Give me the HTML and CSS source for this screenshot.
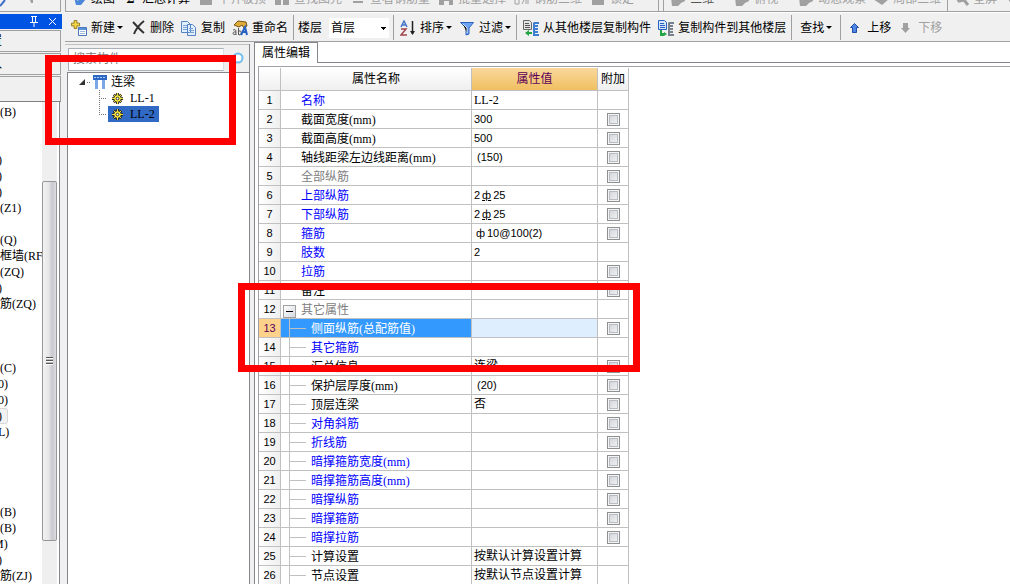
FILE: index.html
```
<!DOCTYPE html>
<html lang="zh-CN">
<head>
<meta charset="utf-8">
<title>属性编辑</title>
<link rel="stylesheet" href="styles.css">
</head>
<body>
<svg class="defs" aria-hidden="true">
  <symbol id="block" viewBox="0 0 16 16"><path fill="#a0a0a0" d="M2 3h12v11H2z"/></symbol>
  <symbol id="blob" viewBox="0 0 16 16"><path fill="#a0a0a0" d="M1 6h5l2-3h7v7l-4 2-3 3H2z"/></symbol>
  <symbol id="beam" viewBox="0 0 16 16"><path fill="#2f67c4" d="M1 1h14v5H1z"/><path stroke="#a9cdf6" stroke-dasharray="2 1" d="M2 3.500h12"/><path fill="#7ba7e6" d="M3 6h3v9H3zM10 6h3v9h-3z"/></symbol>
  <symbol id="gear" viewBox="0 0 12 12"><path stroke="#222" stroke-width="3" d="M6 0v12M0 6h12M2 2l8 8M10 2l-8 8"/><path stroke="#ffee3a" stroke-width="1" d="M6 0v12M0 6h12M2 2l8 8M10 2l-8 8"/><circle cx="6" cy="6" r="3.500" fill="#ffee3a"/><circle cx="6" cy="6" r="1.500" fill="#fff" stroke="#222"/></symbol>
  <symbol id="floors" viewBox="0 0 16 16"><path fill="#e4e4e4" stroke="#666" d="M.5 .5h6l2 2v7h-8z"/><path stroke="#555" d="M2 3.500h4M2 5.500h5M2 7.500h5"/><path fill="#23a445" d="M2 13l4-3v2h3v2H6v2z"/><path fill="#3c7fd0" d="M11 2h5v2h-4v1h3v2h-3v1h3v2h-3v1h3v2h-3v1h4v2h-6V3z"/></symbol>
  <symbol id="floors-to" viewBox="0 0 16 16"><path fill="#d5e5fc" stroke="#2861c4" d="M.5 .5h6l2 2v7h-8z"/><path stroke="#2861c4" d="M2 3.500h4M2 5.500h5M2 7.500h5"/><path fill="#23a445" d="M2 10h2v3h2v-1l3 2-3 2H2z"/><path fill="#77808c" d="M11 2h5v2h-4v1h3v2h-3v1h3v2h-3v1h3v2h-3v1h4v2h-6V3z"/></symbol>
</svg>

<div class="app">
  <aside class="nav">
    <div class="nav-top"><svg width="60" height="11"><path d="M5 0l-5 6" stroke="#3c6fc8" stroke-width="2"/><path d="M30 0h3v3h-2z" fill="#a0a0a0"/></svg></div>
    <header class="nav-title">
      <button aria-label="固定"><svg width="10" height="11" viewBox="0 0 10 11"><path fill="none" stroke="#fff" d="M2 .5h6M3.500 1v5M6.500 1v5M1 6.500h8M5 7v4"/></svg></button>
      <button aria-label="关闭"><svg width="9" height="9" viewBox="0 0 9 9"><path stroke="#fff" d="M1 1l7 7M8 1L1 8"/></svg></button>
    </header>
    <button class="nav-tab">工程设置</button>
    <button class="nav-tab">绘图输入</button>
    <div class="nav-tools"></div>
    <div class="nav-body">
      <ul class="nav-list">
        <li>(B)</li><li></li><li></li><li class="cut">)</li><li class="cut">)</li><li class="cut">)</li><li>(Z1)</li><li></li>
        <li>(Q)</li><li>框墙(RF</li><li>(ZQ)</li><li class="cut">)</li><li>筋(ZQ)</li><li></li><li></li><li></li>
        <li>(C)</li><li class="cut">0)</li><li class="cut">0)</li><li class="hot">)</li><li class="cut">L)</li><li></li><li></li><li></li><li></li>
        <li>(B)</li><li>(B)</li><li class="cut wide">M)</li><li class="cut">)</li><li>筋(ZJ)</li>
      </ul>
      <div class="scroll"><div class="before"></div><div class="thumb"><i></i></div><div class="after"></div></div>
    </div>
  </aside>

  <main class="main">
    <div class="strip">
      <div class="strip-row">
        <span class="tool live"><svg class="ic"><path d="M3 6l8-6 4 8-5 6H5z" fill="#4c86d8"/><path d="M6 9l6-6" stroke="#fff" stroke-width="2"/></svg>绘图</span>
        <span class="tool live"><b>Σ</b>汇总计算</span>
        <span class="tool"><svg class="ic"><use href="#block"/></svg>平齐板顶</span>
        <span class="tool"><svg class="ic"><path fill="#a0a0a0" d="M1 2h6v12H1zM9 2h6v12H9z"/></svg>查找图元</span>
        <span class="tool"><svg class="ic"><path fill="#a0a0a0" d="M3 10h10v2H3z"/></svg>查看钢筋量</span>
        <span class="tool"><svg class="ic"><path fill="#a0a0a0" d="M1 4h14v10h-4v-4H6v4H1z"/></svg>批量选择</span>
        <span class="tool"><svg class="ic"><path fill="none" stroke="#a0a0a0" d="M1 5v8h4V5M8 13l4-8v8M14 5v8"/></svg>钢筋三维</span>
        <span class="tool"><svg class="ic"><use href="#block"/></svg>锁定</span>
      </div>
      <div class="strip-row view">
        <span class="tool pressed"><svg class="ic"><use href="#blob"/></svg>三维<i class="arrow"></i></span>
        <span class="tool"><svg class="ic"><use href="#blob"/></svg>俯视<i class="arrow"></i></span>
        <span class="tool"><svg class="ic"><use href="#blob"/></svg>动态观察</span>
        <span class="tool"><svg class="ic"><path fill="#a0a0a0" d="M0 8l4-6h8l4 6-7 6z"/></svg>局部三维</span>
      </div>
      <div class="strip-row zooming">
        <span class="tool"><svg class="ic"><path fill="none" stroke="#a0a0a0" stroke-width="3" d="M3 5l3 5 5-1 4 5"/></svg>全屏</span>
        <span class="tool"><svg class="ic"><path fill="none" stroke="#a0a0a0" stroke-width="3" d="M3 5l3 5 5-1 4 5"/></svg></span>
      </div>
    </div>

    <div class="toolbar">
      <div class="group">
        <button class="tool"><svg class="ic"><path fill="#f5d746" stroke="#8d7410" d="M3.500 .5h3v3h3v3h-3v3h-3v-3h-3v-3h3z" transform="scale(.9)"/><path fill="#fff" stroke="#4776b8" d="M7.500 7.500h8v8h-8z"/><path fill="#5b92dc" d="M8 8h7v2H8z"/><path stroke="#9ab6dc" d="M9 11.500h5M9 13.500h5"/></svg>新建<i class="arrow"></i></button>
        <button class="tool"><svg class="ic"><path fill="none" stroke="#333" stroke-width="2" d="M3 2c3 3 7 8 11 11M14 1C10 4 6 9 4 14"/></svg>删除</button>
        <button class="tool"><svg class="ic"><path fill="#e4effd" stroke="#5582c2" d="M.5 1.500h6l3 3v8h-9zM6.500 4.500h5l3 3v8h-8z"/><path stroke="#78a2dc" d="M2 5.500h4M2 7.500h4M2 9.500h4M8 8.500h4M8 10.500h5M8 12.500h5"/></svg>复制</button>
        <button class="tool"><svg class="ic"><path fill="#e0ad3b" stroke="#775314" d="M2 5l4-4 8 1 1 4-3 2-2-3-3 2z"/><path fill="none" stroke="#555" d="M1 10c3-1 3 0 3 5M4 12c-4-1-4 4 0 2M6.500 8v7M7 11c3-1 3 4 0 4"/><path fill="none" stroke="#2861c4" stroke-width="2" d="M9 15l4-8 2 8M10 12h4"/></svg>重命名</button>
      </div>
      <div class="group floor">
        <label for="floor">楼层</label>
        <select id="floor"><option>首层</option></select>
      </div>
      <div class="group">
        <button class="tool"><svg class="ic"><path fill="none" stroke="#4477c4" stroke-width="1.500" d="M1 7l3-6 3 6M2 5h4"/><path fill="none" stroke="#a2464c" stroke-width="1.500" d="M1 9h5l-5 6h6"/><path stroke="#222" stroke-width="1.500" d="M12.500 1v13"/><path fill="#222" d="M10 11h5l-2.500 4z"/></svg>排序<i class="arrow"></i></button>
        <button class="tool"><svg class="ic"><path fill="#6da3f2" stroke="#2c61be" d="M1.500 2.500h13L10 8v6l-3 1V8z"/><path stroke="#cfe2ff" d="M4 4l4 4v5"/></svg>过滤<i class="arrow"></i></button>
      </div>
      <div class="group">
        <button class="tool"><svg class="ic"><use href="#floors"/></svg>从其他楼层复制构件</button>
        <button class="tool"><svg class="ic"><use href="#floors-to"/></svg>复制构件到其他楼层</button>
      </div>
      <div class="group find"><button class="tool">查找<i class="arrow"></i></button></div>
      <div class="group">
        <button class="tool"><svg class="ic"><path fill="#4d86e4" stroke="#1e4da8" d="M7.500 3.500l4 4h-2v5h-4v-5h-2z"/></svg>上移</button>
        <button class="tool" disabled><svg class="ic"><path fill="#a0a0a0" d="M7.500 13L3 8h2V3h5v5h2z"/></svg>下移</button>
      </div>
    </div>

    <div class="work">
      <section class="parts">
        <div class="search"><input type="text" placeholder="搜索构件" aria-label="搜索构件"><button aria-label="搜索"><svg width="14" height="14"><circle cx="7" cy="6" r="4.500" fill="#fff" stroke="#72bdec" stroke-width="2"/></svg></button></div>
        <ul class="tree">
          <li class="root"><svg width="8" height="8"><path fill="#333" d="M7 1v6H1z"/></svg><i class="dots"></i><svg class="beam"><use href="#beam"/></svg>连梁
            <ul>
              <li><i class="dots"></i><span class="node"><svg><use href="#gear"/></svg>LL-1</span></li>
              <li><i class="dots"></i><span class="node picked"><svg><use href="#gear"/></svg>LL-2</span></li>
            </ul>
          </li>
        </ul>
        <div class="mark mark-tree"></div>
      </section>

      <section class="props">
        <div class="tabs"><button class="tab">属性编辑</button></div>
        <div class="sheet">
          <table>
            <colgroup><col class="c-no"><col class="c-name"><col class="c-value"><col class="c-add"></colgroup>
            <thead><tr><th></th><th>属性名称</th><th class="current">属性值</th><th>附加</th></tr></thead>
            <tbody>
              <tr><th>1</th><td class="blue">名称</td><td>LL-2</td><td></td></tr>
              <tr><th>2</th><td>截面宽度(mm)</td><td class="num">300</td><td><input type="checkbox" aria-label="附加 2"></td></tr>
              <tr><th>3</th><td>截面高度(mm)</td><td class="num">500</td><td><input type="checkbox" aria-label="附加 3"></td></tr>
              <tr><th>4</th><td>轴线距梁左边线距离(mm)</td><td class="num paren">(150)</td><td><input type="checkbox" aria-label="附加 4"></td></tr>
              <tr><th>5</th><td class="gray">全部纵筋</td><td></td><td><input type="checkbox" aria-label="附加 5"></td></tr>
              <tr><th>6</th><td class="blue">上部纵筋</td><td class="num">2<span class="bar two">ф</span>25</td><td><input type="checkbox" aria-label="附加 6"></td></tr>
              <tr><th>7</th><td class="blue">下部纵筋</td><td class="num">2<span class="bar two">ф</span>25</td><td><input type="checkbox" aria-label="附加 7"></td></tr>
              <tr><th>8</th><td class="blue">箍筋</td><td class="num"><span class="bar">ф</span>10@100(2)</td><td><input type="checkbox" aria-label="附加 8"></td></tr>
              <tr><th>9</th><td class="blue">肢数</td><td class="num">2</td><td></td></tr>
              <tr><th>10</th><td class="blue">拉筋</td><td></td><td><input type="checkbox" aria-label="附加 10"></td></tr>
              <tr><th>11</th><td>备注</td><td></td><td><input type="checkbox" aria-label="附加 11"></td></tr>
              <tr><th>12</th><td class="gray parent"><button class="fold" aria-label="折叠"></button>其它属性</td><td></td><td></td></tr>
              <tr class="active"><th>13</th><td class="sub">侧面纵筋(总配筋值)</td><td></td><td><input type="checkbox" aria-label="附加 13"></td></tr>
              <tr><th>14</th><td class="sub blue">其它箍筋</td><td></td><td></td></tr>
              <tr><th>15</th><td class="sub">汇总信息</td><td>连梁</td><td><input type="checkbox" aria-label="附加 15"></td></tr>
              <tr><th>16</th><td class="sub">保护层厚度(mm)</td><td class="num paren">(20)</td><td><input type="checkbox" aria-label="附加 16"></td></tr>
              <tr><th>17</th><td class="sub">顶层连梁</td><td>否</td><td><input type="checkbox" aria-label="附加 17"></td></tr>
              <tr><th>18</th><td class="sub blue">对角斜筋</td><td></td><td><input type="checkbox" aria-label="附加 18"></td></tr>
              <tr><th>19</th><td class="sub blue">折线筋</td><td></td><td><input type="checkbox" aria-label="附加 19"></td></tr>
              <tr><th>20</th><td class="sub blue">暗撑箍筋宽度(mm)</td><td></td><td><input type="checkbox" aria-label="附加 20"></td></tr>
              <tr><th>21</th><td class="sub blue">暗撑箍筋高度(mm)</td><td></td><td><input type="checkbox" aria-label="附加 21"></td></tr>
              <tr><th>22</th><td class="sub blue">暗撑纵筋</td><td></td><td><input type="checkbox" aria-label="附加 22"></td></tr>
              <tr><th>23</th><td class="sub blue">暗撑箍筋</td><td></td><td><input type="checkbox" aria-label="附加 23"></td></tr>
              <tr><th>24</th><td class="sub blue">暗撑拉筋</td><td></td><td><input type="checkbox" aria-label="附加 24"></td></tr>
              <tr><th>25</th><td class="sub">计算设置</td><td>按默认计算设置计算</td><td></td></tr>
              <tr><th>26</th><td class="sub">节点设置</td><td>按默认节点设置计算</td><td></td></tr>
            </tbody>
          </table>
        </div>
        <div class="mark mark-rows"></div>
      </section>
    </div>
  </main>
</div>
</body>
</html>
```
FILE: styles.css
```
* { box-sizing: border-box; }
body {
  margin: 0;
  font: 12px/16px "Liberation Serif", "Noto Sans CJK SC", sans-serif;
  color: #000;
  background: #f0f0f0;
}
button, input, select { font: inherit; color: inherit; margin: 0; padding: 0; border: 0; background: none; }
ul { list-style: none; margin: 0; padding: 0; }
svg { display: block; flex: none; }
.defs { display: none; }
.ic { width: 16px; height: 16px; }

.app { display: flex; height: 100vh; overflow: hidden; }

/* Left navigation */
.nav { flex: none; width: 62px; display: flex; flex-direction: column; }
.nav-top { height: 12px; flex: none; border-right: 1px solid #a0a0a0; border-bottom: 1px solid #a0a0a0; margin-right: 1px; }
.nav-title {
  flex: none; height: 15px; margin: 2px 0 1px; padding-right: 5px;
  display: flex; align-items: center; justify-content: flex-end; gap: 9px;
  background: #0054e3;
}
.nav-tab, .nav-tools {
  flex: none; height: 22px; width: 61px; margin-bottom: 1px;
  border: 1px solid #a0a0a0; border-left: 0; background: #f0f0f0;
}
.nav-tab { display: flex; align-items: center; justify-content: flex-end; padding-right: 58px; white-space: nowrap; overflow: hidden; }
.nav-tools { height: 26px; margin-bottom: 0; border-bottom-color: #808080; }
.nav-body { flex: 1; min-height: 0; display: flex; background: #fff; border-right: 1px solid #85858c; margin-right: 2px; }
.nav-list { flex: 1; min-width: 0; overflow: hidden; padding-top: 2px; white-space: nowrap; }
.nav-list li { height: 16px; }
.nav-list .cut { text-indent: -2px; }
.nav-list .wide { text-indent: -7px; }
.nav-list .hot { width: 8px; text-indent: -2px; background: #f2f2f2; border: 1px solid #d8d8d8; border-left: 0; border-radius: 0 3px 3px 0; line-height: 14px; }
.scroll { width: 15px; margin-right: 2px; display: flex; flex-direction: column; background: #efefef; }
.before { flex: 79; }
.thumb {
  flex: 360; display: flex; align-items: center; justify-content: center;
  border: 1px solid #979797; border-radius: 2px;
  background: linear-gradient(90deg, #f3f3f3, #e6e6e8 45%, #c8c8cf 70%, #dcdce0);
}
.thumb i { width: 7px; height: 8px; background: repeating-linear-gradient(#555 0 1px, #fff 1px 2px, #bbb 2px 3px); }
.after { flex: 43; }

/* Main area */
.main { flex: 1; min-width: 0; margin-left: 3px; display: flex; flex-direction: column; }
.tool { display: flex; align-items: center; gap: 4px; white-space: nowrap; flex: none; }
.arrow { flex: none; border: 3px solid transparent; border-top-color: #000; border-bottom: 0; margin-left: -2px; }
.strip {
  flex: none; height: 12px; overflow: hidden; display: flex; align-items: flex-end;
  border-left: 1px solid #a0a0a0; border-bottom: 1px solid #a0a0a0; color: #a0a0a0;
}
.strip-row { flex: none; height: 25px; display: flex; align-items: center; gap: 8px; padding: 0 24px 0 5px; border-right: 1px solid #a0a0a0; }
.strip-row.view { gap: 7px; margin-left: 4px; padding: 0 6px; border-left: 1px solid #a0a0a0; }
.strip-row.zooming { padding: 0 5px; border: 0; }
.strip .arrow { border-top-color: #a0a0a0; margin-right: 5px; }
.live { color: #000; }
.live b { width: 15px; text-align: center; }
.pressed { color: #555; }

.toolbar {
  flex: none; height: 30px; padding-top: 1px; display: flex; align-items: center;
  border-top: 1px solid #fff; border-bottom: 1px solid #a0a0a0;
}
.group { flex: none; height: 25px; display: flex; align-items: center; gap: 7px; padding: 0 5px 0 6px; border-right: 1px solid #a0a0a0; }
.group:last-child { border: 0; }
.group.floor { padding: 0 4px; }
.group.find { padding: 0 8px; }
.toolbar .tool:disabled { color: #a0a0a0; }
.floor select {
  appearance: none; width: 60px; height: 20px; padding: 0 2px;
  background: linear-gradient(#000, #000) 52px 9px / 5px 1px no-repeat,
    linear-gradient(#000, #000) 53px 10px / 3px 1px no-repeat,
    linear-gradient(#000, #000) 54px 11px / 1px 1px no-repeat, #fff;
}

.work { flex: 1; min-height: 0; display: flex; }

/* Component tree */
.parts { position: relative; flex: none; width: 185px; display: flex; flex-direction: column; border-right: 1px solid #85858c; margin: 2px 0 0; }
.search { flex: none; height: 28px; padding: 3px 4px 2px 3px; display: flex; align-items: center; gap: 7px; border-top: 1px solid #c0c0c0; }
.search input { flex: 1; min-width: 0; height: 23px; padding: 0 4px; background: #fff; border: 1px solid #a9b0b8; border-right-color: #d8e0e8; }
.search button { width: 14px; }
.search input::placeholder { color: #777; opacity: 1; }
.tree { flex: 1; margin-left: 2px; padding: 1px 0 0 10px; background: #fff; border: solid #85858c; border-width: 1px 0 0 1px; }
.root { display: flex; flex-wrap: wrap; align-items: center; }
.dots { flex: none; height: 1px; width: 4px; margin: 0 1px; background: repeating-linear-gradient(90deg, #777 0 1px, transparent 1px 2px); }
.beam { width: 16px; height: 16px; margin-right: 3px; }
.root ul { flex: 0 0 100%; padding-left: 21px; background: repeating-linear-gradient(#777 0 1px, transparent 1px 2px) 21px 0 / 1px 25px no-repeat; }
.root ul li { display: flex; align-items: center; height: 16px; }
.root ul .dots { width: 8px; margin: 0 1px 0 0; }
.node { display: flex; align-items: center; gap: 7px; height: 16px; padding: 0 4px; }
.node svg { width: 11px; height: 11px; }
.picked { background: #316ac5; }

/* Property editor */
.props { position: relative; flex: 1; min-width: 0; margin-left: 4px; border-left: 1px solid #85858c; background: #fff; display: flex; flex-direction: column; }
.tabs { flex: none; height: 21px; display: flex; }
.tabs::after { content: ""; flex: 1; border-bottom: 1px solid #85858c; }
.tab { padding: 0 7px; border: 1px solid #85858c; border-width: 1px 1px 0 0; }
.sheet { flex: 1; min-height: 0; overflow: hidden; margin: 3px 0 0 3px; padding-top: 1px; border: solid #a0a0a8; border-width: 1px 0 0 1px; }
table { table-layout: fixed; width: 370px; border-spacing: 0; }
.c-no { width: 22px; }
.c-name { width: 191px; }
.c-value { width: 126px; }
.c-add { width: 31px; }
th, td { height: 19px; padding: 0; line-height: 16px; border: solid #c0c0c0; border-width: 0 1px 1px 0; white-space: nowrap; overflow: hidden; }
th { font-weight: normal; background: linear-gradient(#fff, #efefef); }
thead th { height: 23px; }
thead .current { color: #5c0058; background: linear-gradient(#fad89c, #f0bf60); }
tbody th { font: 11px/16px "Liberation Sans", sans-serif; background: linear-gradient(90deg, #fff, #efefef); }
td:nth-child(2) { padding: 1px 0 0 20px; }
td:nth-child(3) { padding-left: 2px; }
td:nth-child(4) { text-align: center; }
td.num { font: 11px/16px "Liberation Sans", sans-serif; }
td.num.paren { padding-left: 5px; }
.bar { display: inline-block; width: 13px; text-align: center; }
.two { text-decoration: underline; }
.blue { color: #00f; }
.gray { color: #808080; }
td.sub:nth-child(2) {
  padding-left: 30px;
  background: linear-gradient(#c0c0c0, #c0c0c0) 8px 0 / 1px 100% no-repeat,
    linear-gradient(#c0c0c0, #c0c0c0) 9px 9px / 16px 1px no-repeat;
}
td.parent:nth-child(2) { padding-left: 2px; }
.fold {
  width: 13px; height: 13px; margin-right: 5px; vertical-align: -3px; border: 1px solid #a0a0a0;
  background: linear-gradient(#000, #000) 2px 5px / 7px 1px no-repeat, linear-gradient(135deg, #fff, #d5d8e0);
}
.active th { color: #5c0058; background: #ffd28c; }
.active td.sub:nth-child(2) { color: #fff; background-color: #39f; }
.active td:nth-child(3) { background: #dfeeff; }
input[type="checkbox"] {
  appearance: none; display: block; width: 13px; height: 13px; margin: 0 auto;
  border: 1px solid #8e8f8f; box-shadow: inset 0 0 0 1px #f4f4f4, inset 0 0 0 2px #b8bcc4;
  background: linear-gradient(135deg, #cdd0d6, #f6f6f6);
}

/* Highlight frames over the panels */
.mark { position: absolute; border: 7px solid #f00; pointer-events: none; z-index: 2; }
.mark-tree { left: -20px; top: 11px; width: 191px; height: 90px; }
.mark-rows { left: -17px; top: 241px; width: 402px; height: 89px; }
```
